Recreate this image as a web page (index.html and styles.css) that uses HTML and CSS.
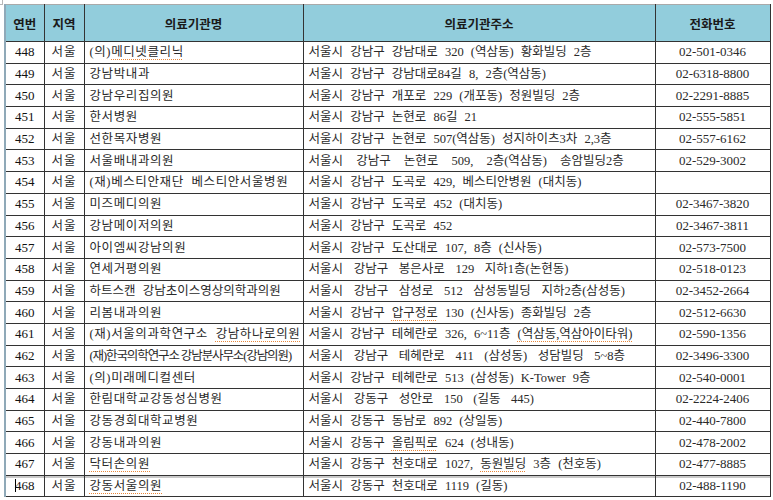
FILE: index.html
```html
<!DOCTYPE html>
<html lang="ko">
<head>
<meta charset="utf-8">
<title>의료기관 목록</title>
<link rel="stylesheet" href="styles.css">
</head>
<body>
<span class="corner"></span>
<table class="list">
  <colgroup>
    <col class="c-no"><col class="c-reg"><col class="c-name"><col class="c-addr"><col class="c-tel">
  </colgroup>
  <thead>
    <tr><th>연번</th><th>지역</th><th>의료기관명</th><th>의료기관주소</th><th>전화번호</th></tr>
  </thead>
  <tbody>
    <tr><td class="no">448</td><td class="reg">서울</td><td class="name">(의)<span class="sq">메디넷클리닉</span></td><td class="addr">서울시 강남구 강남대로 320 (역삼동) 황화빌딩 2층</td><td class="tel">02-501-0346</td></tr>
    <tr><td class="no">449</td><td class="reg">서울</td><td class="name">강남박내과</td><td class="addr">서울시 강남구 강남대로84길 8, 2층(역삼동)</td><td class="tel">02-6318-8800</td></tr>
    <tr><td class="no">450</td><td class="reg">서울</td><td class="name">강남우리집의원</td><td class="addr">서울시 강남구 개포로 229 (개포동) 정원빌딩 2층</td><td class="tel">02-2291-8885</td></tr>
    <tr><td class="no">451</td><td class="reg">서울</td><td class="name">한서병원</td><td class="addr">서울시 강남구 논현로 86길 21</td><td class="tel">02-555-5851</td></tr>
    <tr><td class="no">452</td><td class="reg">서울</td><td class="name">선한목자병원</td><td class="addr">서울시 강남구 논현로 507(역삼동) 성지하이츠3차 2,3층</td><td class="tel">02-557-6162</td></tr>
    <tr><td class="no">453</td><td class="reg">서울</td><td class="name">서울배내과의원</td><td class="addr wider">서울시 강남구 논현로 509, 2층(역삼동) 송암빌딩2층</td><td class="tel">02-529-3002</td></tr>
    <tr><td class="no">454</td><td class="reg">서울</td><td class="name">(재)베스티안재단 베스티안서울병원</td><td class="addr">서울시 강남구 도곡로 429, 베스티안병원 (대치동)</td><td class="tel"></td></tr>
    <tr><td class="no">455</td><td class="reg">서울</td><td class="name">미즈메디의원</td><td class="addr">서울시 강남구 도곡로 452 (대치동)</td><td class="tel">02-3467-3820</td></tr>
    <tr><td class="no">456</td><td class="reg">서울</td><td class="name">강남메이저의원</td><td class="addr">서울시 강남구 도곡로 452</td><td class="tel">02-3467-3811</td></tr>
    <tr><td class="no">457</td><td class="reg">서울</td><td class="name">아이엠씨강남의원</td><td class="addr">서울시 강남구 도산대로 107, 8층 (신사동)</td><td class="tel">02-573-7500</td></tr>
    <tr><td class="no">458</td><td class="reg">서울</td><td class="name">연세거평의원</td><td class="addr wide">서울시 강남구 봉은사로 129 지하1층(논현동)</td><td class="tel">02-518-0123</td></tr>
    <tr><td class="no">459</td><td class="reg">서울</td><td class="name plain">하트스캔 강남초이스영상의학과의원</td><td class="addr wide">서울시 강남구 삼성로 512 삼성동빌딩 지하2층(삼성동)</td><td class="tel">02-3452-2664</td></tr>
    <tr><td class="no">460</td><td class="reg">서울</td><td class="name">리봄내과의원</td><td class="addr">서울시 강남구 <span class="sq">압구정로</span> 130 (신사동) 종화빌딩 2층</td><td class="tel">02-512-6630</td></tr>
    <tr><td class="no">461</td><td class="reg">서울</td><td class="name">(재)서울의과학연구소 <span class="sq">강남하나로의원</span></td><td class="addr">서울시 강남구 테헤란로 326, 6~11층 <span class="sq">(역삼동,역삼아이타워)</span></td><td class="tel">02-590-1356</td></tr>
    <tr><td class="no">462</td><td class="reg">서울</td><td class="name squeeze">(재)한국의학연구소 강남분사무소(강남의원)</td><td class="addr wide">서울시 강남구 테헤란로 411 (삼성동) 성담빌딩 5~8층</td><td class="tel">02-3496-3300</td></tr>
    <tr><td class="no">463</td><td class="reg">서울</td><td class="name">(의)미래메디컬센터</td><td class="addr">서울시 강남구 테헤란로 513 (삼성동) K-Tower 9층</td><td class="tel">02-540-0001</td></tr>
    <tr><td class="no">464</td><td class="reg">서울</td><td class="name">한림대학교강동성심병원</td><td class="addr wide">서울시 강동구 성안로 150 (길동 445)</td><td class="tel">02-2224-2406</td></tr>
    <tr><td class="no">465</td><td class="reg">서울</td><td class="name">강동경희대학교병원</td><td class="addr">서울시 강동구 동남로 892 (상일동)</td><td class="tel">02-440-7800</td></tr>
    <tr><td class="no">466</td><td class="reg">서울</td><td class="name">강동내과의원</td><td class="addr">서울시 강동구 <span class="sq">올림픽로</span> 624 (성내동)</td><td class="tel">02-478-2002</td></tr>
    <tr class="before-break"><td class="no">467</td><td class="reg">서울</td><td class="name"><span class="sq">닥터손의원</span></td><td class="addr">서울시 강동구 천호대로 1027, <span class="sq">동원빌딩</span> 3층 (천호동)</td><td class="tel">02-477-8885</td></tr>
    <tr class="after-break"><td class="no"><span class="caret"></span>468</td><td class="reg">서울</td><td class="name"><span class="sq">강동서울의원</span></td><td class="addr">서울시 강동구 천호대로 1119 (길동)</td><td class="tel">02-488-1190</td></tr>
  </tbody>
</table>
</body>
</html>
```
FILE: styles.css
```css
html, body {
  margin: 0;
  background: #ffffff;
}
body {
  padding: 4px 0 0 4px;
  font-family: "Liberation Serif", "Noto Sans CJK KR", serif;
  font-size: 12.5px;
  color: #2a2a2a;
  position: relative;
}
.corner {
  position: absolute;
  left: 0;
  top: 0;
  width: 2px;
  height: 4px;
  border-right: 1px solid #b8b8b8;
  border-bottom: 1px solid #b8b8b8;
}
.list {
  border-collapse: collapse;
  table-layout: fixed;
  width: 765px;
  border-top: 1px solid #a9a9a9;
  border-left: 2px solid #8fa9b8;
  border-right: 1px solid #333;
  border-bottom: 1px solid #3a4a55;
}
.c-no { width: 39px; }
.c-reg { width: 40px; }
.c-name { width: 219px; }
.c-addr { width: 352px; }
.c-tel { width: 115px; }

.list th {
  height: 36px;
  background: #92cddc;
  font-family: "Noto Sans CJK KR", sans-serif;
  font-weight: 700;
  font-size: 12.5px;
  color: #1a1a1a;
  border: 1px solid #333;
  border-top-color: #a9a9a9;
  padding: 0;
  text-align: center;
}
.list tbody tr {
  height: 21.7px;
}
.list td {
  border: 1px solid #333;
  padding: 0 5px;
  white-space: nowrap;
  overflow: hidden;
  word-spacing: 4px;
  line-height: 16px;
}
.list td.no,
.list td.reg,
.list td.tel {
  text-align: center;
  padding: 0;
  word-spacing: 0;
}
.list td.no {
  font-size: 13px;
  color: #111;
}
.list td.tel {
  font-size: 13px;
}
.list td.reg {
  letter-spacing: 1px;
}
.list td.name {
  letter-spacing: 0.6px;
}
.list td.name.plain {
  letter-spacing: 0;
}
.list td.name.squeeze {
  letter-spacing: -1.1px;
  word-spacing: 0;
}
.list td.addr.wide {
  word-spacing: 7.5px;
}
.list td.addr.wider {
  word-spacing: 10px;
}
.sq {
  text-decoration: underline dotted #e8873a;
  text-decoration-thickness: 1px;
  text-underline-offset: 3px;
}
.before-break td {
  border-bottom: 1px solid #333;
}
.after-break td {
  box-shadow: inset 0 2px 0 #c9c9c9;
}
.caret {
  display: inline-block;
  width: 1px;
  height: 13px;
  background: #000;
  margin-right: -1px;
  vertical-align: -2px;
}
```
